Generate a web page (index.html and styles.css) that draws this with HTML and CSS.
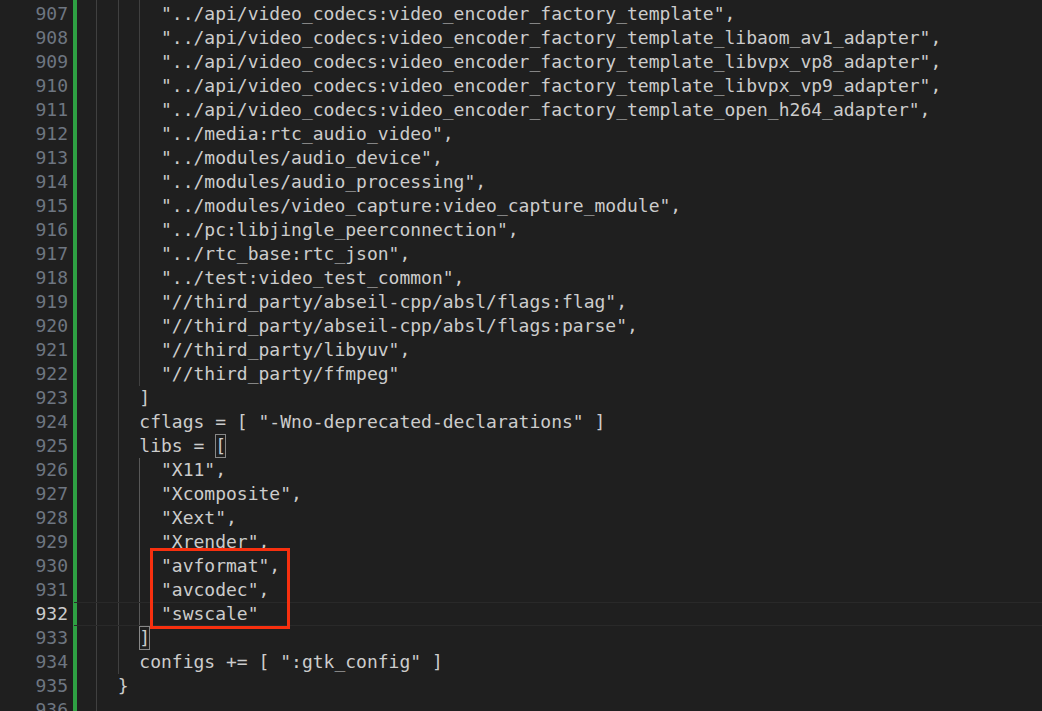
FILE: index.html
```html
<!DOCTYPE html>
<html lang="en">
<head>
    <meta charset="UTF-8">
    <meta name="viewport" content="width=device-width, initial-scale=1.0">
    <title>BUILD.gn - editor</title>
    <link rel="stylesheet" href="styles.css">
</head>
<body>

    <!-- Editor: gutter + code, scrolled so line 907 sits at the top -->
    <div class="editor">
        <div class="row"><span class="num">906</span><span class="code"><span class="ind"></span><span class="ind g"></span><span class="ind g"></span><span class="ind g"></span>"../api/video_codecs:video_decoder_factory_template_open_h264_adapter",</span></div>
        <div class="row"><span class="num">907</span><span class="code"><span class="ind"></span><span class="ind g"></span><span class="ind g"></span><span class="ind g"></span>"../api/video_codecs:video_encoder_factory_template",</span></div>
        <div class="row"><span class="num">908</span><span class="code"><span class="ind"></span><span class="ind g"></span><span class="ind g"></span><span class="ind g"></span>"../api/video_codecs:video_encoder_factory_template_libaom_av1_adapter",</span></div>
        <div class="row"><span class="num">909</span><span class="code"><span class="ind"></span><span class="ind g"></span><span class="ind g"></span><span class="ind g"></span>"../api/video_codecs:video_encoder_factory_template_libvpx_vp8_adapter",</span></div>
        <div class="row"><span class="num">910</span><span class="code"><span class="ind"></span><span class="ind g"></span><span class="ind g"></span><span class="ind g"></span>"../api/video_codecs:video_encoder_factory_template_libvpx_vp9_adapter",</span></div>
        <div class="row"><span class="num">911</span><span class="code"><span class="ind"></span><span class="ind g"></span><span class="ind g"></span><span class="ind g"></span>"../api/video_codecs:video_encoder_factory_template_open_h264_adapter",</span></div>
        <div class="row"><span class="num">912</span><span class="code"><span class="ind"></span><span class="ind g"></span><span class="ind g"></span><span class="ind g"></span>"../media:rtc_audio_video",</span></div>
        <div class="row"><span class="num">913</span><span class="code"><span class="ind"></span><span class="ind g"></span><span class="ind g"></span><span class="ind g"></span>"../modules/audio_device",</span></div>
        <div class="row"><span class="num">914</span><span class="code"><span class="ind"></span><span class="ind g"></span><span class="ind g"></span><span class="ind g"></span>"../modules/audio_processing",</span></div>
        <div class="row"><span class="num">915</span><span class="code"><span class="ind"></span><span class="ind g"></span><span class="ind g"></span><span class="ind g"></span>"../modules/video_capture:video_capture_module",</span></div>
        <div class="row"><span class="num">916</span><span class="code"><span class="ind"></span><span class="ind g"></span><span class="ind g"></span><span class="ind g"></span>"../pc:libjingle_peerconnection",</span></div>
        <div class="row"><span class="num">917</span><span class="code"><span class="ind"></span><span class="ind g"></span><span class="ind g"></span><span class="ind g"></span>"../rtc_base:rtc_json",</span></div>
        <div class="row"><span class="num">918</span><span class="code"><span class="ind"></span><span class="ind g"></span><span class="ind g"></span><span class="ind g"></span>"../test:video_test_common",</span></div>
        <div class="row"><span class="num">919</span><span class="code"><span class="ind"></span><span class="ind g"></span><span class="ind g"></span><span class="ind g"></span>"//third_party/abseil-cpp/absl/flags:flag",</span></div>
        <div class="row"><span class="num">920</span><span class="code"><span class="ind"></span><span class="ind g"></span><span class="ind g"></span><span class="ind g"></span>"//third_party/abseil-cpp/absl/flags:parse",</span></div>
        <div class="row"><span class="num">921</span><span class="code"><span class="ind"></span><span class="ind g"></span><span class="ind g"></span><span class="ind g"></span>"//third_party/libyuv",</span></div>
        <div class="row"><span class="num">922</span><span class="code"><span class="ind"></span><span class="ind g"></span><span class="ind g"></span><span class="ind g"></span>"//third_party/ffmpeg"</span></div>
        <div class="row"><span class="num">923</span><span class="code"><span class="ind"></span><span class="ind g"></span><span class="ind g"></span>]</span></div>
        <div class="row"><span class="num">924</span><span class="code"><span class="ind"></span><span class="ind g"></span><span class="ind g"></span>cflags = [ "-Wno-deprecated-declarations" ]</span></div>
        <div class="row"><span class="num">925</span><span class="code"><span class="ind"></span><span class="ind g"></span><span class="ind g"></span>libs = <span class="match">[</span></span></div>
        <div class="row"><span class="num">926</span><span class="code"><span class="ind"></span><span class="ind g"></span><span class="ind g"></span><span class="ind g active"></span>"X11",</span></div>
        <div class="row"><span class="num">927</span><span class="code"><span class="ind"></span><span class="ind g"></span><span class="ind g"></span><span class="ind g active"></span>"Xcomposite",</span></div>
        <div class="row"><span class="num">928</span><span class="code"><span class="ind"></span><span class="ind g"></span><span class="ind g"></span><span class="ind g active"></span>"Xext",</span></div>
        <div class="row"><span class="num">929</span><span class="code"><span class="ind"></span><span class="ind g"></span><span class="ind g"></span><span class="ind g active"></span>"Xrender",</span></div>
        <div class="row"><span class="num">930</span><span class="code"><span class="ind"></span><span class="ind g"></span><span class="ind g"></span><span class="ind g active"></span>"avformat",</span></div>
        <div class="row"><span class="num">931</span><span class="code"><span class="ind"></span><span class="ind g"></span><span class="ind g"></span><span class="ind g active"></span>"avcodec",</span></div>
        <div class="row current"><span class="num">932</span><span class="code"><span class="ind"></span><span class="ind g"></span><span class="ind g"></span><span class="ind g active"></span>"swscale"</span></div>
        <div class="row"><span class="num">933</span><span class="code"><span class="ind"></span><span class="ind g"></span><span class="ind g"></span><span class="match">]</span></span></div>
        <div class="row"><span class="num">934</span><span class="code"><span class="ind"></span><span class="ind g"></span><span class="ind g"></span>configs += [ ":gtk_config" ]</span></div>
        <div class="row"><span class="num">935</span><span class="code"><span class="ind"></span><span class="ind g"></span>}</span></div>
        <div class="row"><span class="num">936</span><span class="code"><span class="ind"></span><span class="ind g"></span></span></div>

        <!-- Annotation drawn over lines 930-932 -->
        <div class="callout"></div>
    </div>

</body>
</html>
```

FILE: styles.css
```css
/* General body style */
body {
    margin: 0;
    padding: 0;
    background-color: #1f1f1f;
    color: #cccccc;
    overflow: hidden;
}

/* Editor area, scrolled a bit past line 906 */
.editor {
    position: relative;
    margin-top: -22px;
    font-family: "DejaVu Sans Mono", monospace;
    font-size: 18px;
}

.row {
    display: flex;
    height: 24px;
    line-height: 24px;
}

/* Gutter: line numbers + git "added" bar */
.num {
    flex: none;
    width: 68px;
    padding-right: 5px;
    text-align: right;
    color: #6e7681;
    border-right: 4px solid #2ea043;
}

.current .num {
    color: #cccccc;
}

/* Code text */
.code {
    flex: 1;
    margin-left: -2.7px;
    white-space: pre;
    box-sizing: border-box;
    height: 24px;
}

.current .code {
    border-top: 1px solid #292929;
    border-bottom: 1px solid #292929;
    line-height: 22px;
}

/* Indentation: two columns each, guide on the left edge */
.ind {
    display: inline-block;
    width: 2ch;
    height: 24px;
    vertical-align: top;
    box-sizing: border-box;
}

.ind.g {
    border-left: 1px solid #404040;
}

.ind.active {
    border-left-color: #585858;
}

.current .ind {
    height: 22px;
}

/* Matching bracket highlight */
.match {
    display: inline-block;
    height: 24px;
    vertical-align: top;
    box-shadow: inset 0 0 0 1px #888888;
}

/* Red annotation box */
.callout {
    position: absolute;
    left: 150px;
    top: 570px;
    width: 140px;
    height: 81px;
    box-sizing: border-box;
    border: 3px solid #f7300f;
}
```
